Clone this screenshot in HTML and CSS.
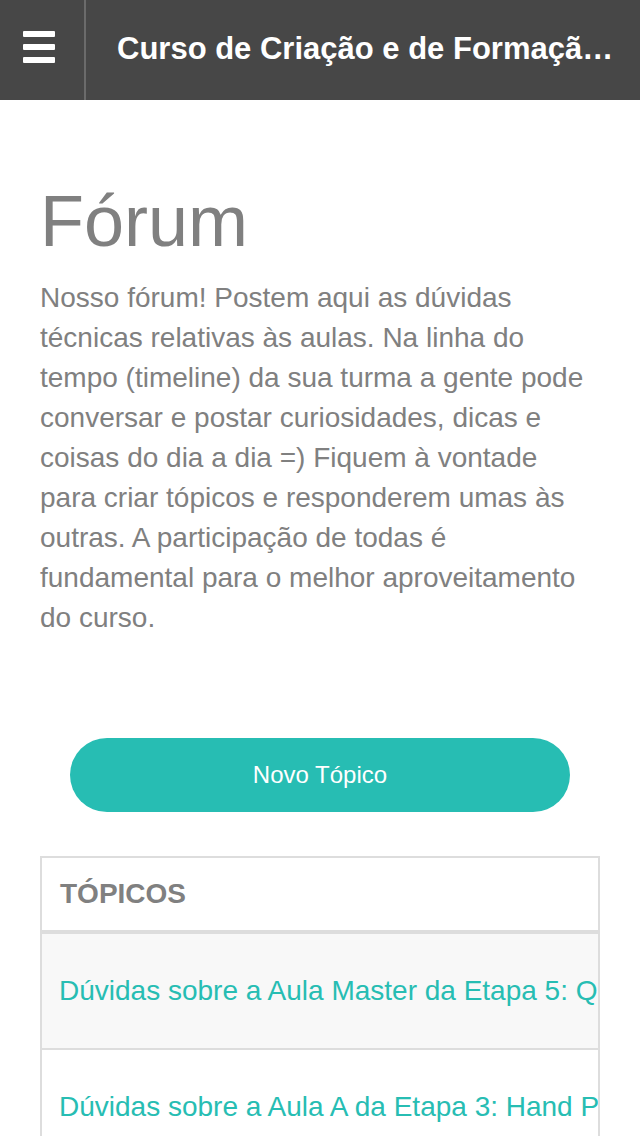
FILE: index.html
```html
<!DOCTYPE html>
<html lang="pt">
<head>
<meta charset="utf-8">
<title>Fórum</title>
<link rel="stylesheet" href="styles.css">
</head>
<body>
<header class="topbar">
  <button class="menu-btn" aria-label="Menu">
    <span class="bar"></span><span class="bar"></span><span class="bar"></span>
  </button>
  <div class="topbar-title">Curso de Criação e de Formação de Facilitadoras</div>
</header>
<main class="content">
  <h1 class="page-title">Fórum</h1>
  <p class="intro">Nosso fórum! Postem aqui as dúvidas técnicas relativas às aulas. Na linha do tempo (timeline) da sua turma a gente pode conversar e postar curiosidades, dicas e coisas do dia a dia =) Fiquem à vontade para criar tópicos e responderem umas às outras. A participação de todas é fundamental para o melhor aproveitamento do curso.</p>
  <div class="actions">
    <a class="new-topic" href="#">Novo Tópico</a>
  </div>
  <section class="topics">
    <div class="topics-head">TÓPICOS</div>
    <a class="topic-row alt" href="#">Dúvidas sobre a Aula Master da Etapa 5: Quem é você como facilitadora?</a>
    <a class="topic-row" href="#">Dúvidas sobre a Aula A da Etapa 3: Hand Pan e instrumentos</a>
  </section>
</main>
</body>
</html>
```
FILE: styles.css
```css
* { box-sizing: border-box; }
html, body { margin: 0; padding: 0; background: #fff; }
body { font-family: "Liberation Sans", Arial, sans-serif; }

.topbar {
  display: flex;
  align-items: stretch;
  height: 100px;
  background: #474747;
}
.menu-btn {
  width: 86px;
  flex: 0 0 86px;
  background: transparent;
  border: 0;
  border-right: 2px solid #6b6b6b;
  padding: 31px 0 0 23px;
  display: flex;
  flex-direction: column;
  justify-content: flex-start;
  gap: 7px;
  cursor: pointer;
}
.bar {
  display: block;
  width: 32px;
  height: 6px;
  border-radius: 1px;
  background: #fff;
}
.topbar-title {
  flex: 1;
  min-width: 0;
  padding: 0 10px 0 31px;
  color: #fff;
  font-weight: bold;
  font-size: 31px;
  line-height: 97px;
  white-space: nowrap;
  overflow: hidden;
  text-overflow: ellipsis;
}

.content { padding: 85px 40px 0; }
.page-title {
  margin: 0;
  font-size: 72px;
  line-height: 72px;
  font-weight: normal;
  color: #808080;
}
.intro {
  margin: 21px 0 0;
  font-size: 28px;
  line-height: 40px;
  color: #808080;
}
.actions {
  display: flex;
  justify-content: center;
  margin-top: 100px;
}
.new-topic {
  width: 500px;
  height: 74px;
  border-radius: 37px;
  background: #27bdb3;
  color: #fff;
  font-size: 24px;
  text-decoration: none;
  display: flex;
  align-items: center;
  justify-content: center;
}
.topics {
  margin-top: 44px;
  border: 2px solid #dddddd;
  border-bottom: 0;
}
.topics-head {
  height: 76px;
  padding-left: 18px;
  display: flex;
  align-items: center;
  border-bottom: 4px solid #dddddd;
  font-size: 28px;
  font-weight: bold;
  color: #808080;
}
.topic-row {
  display: block;
  height: 116px;
  line-height: 114px;
  padding-left: 17px;
  border-bottom: 2px solid #dddddd;
  font-size: 28px;
  color: #27bdb3;
  text-decoration: none;
  white-space: nowrap;
  overflow: hidden;
}
.topic-row.alt { background: #f8f8f8; }
```
